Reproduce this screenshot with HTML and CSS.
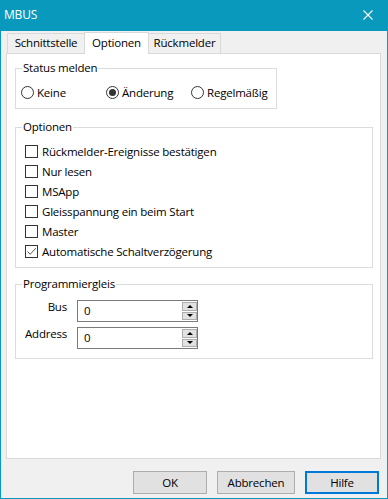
FILE: index.html
```html
<!DOCTYPE html>
<html lang="de">
<head>
    <meta charset="UTF-8">
    <title>MBUS</title>
    <link rel="stylesheet" href="styles.css">
</head>
<body>
    <div class="window">
        <!-- Title bar -->
        <div class="titlebar">
            <span class="title">MBUS</span>
            <svg class="close" width="10" height="10" viewBox="0 0 10 10">
                <path d="M0.5 0.5 L9.5 9.5 M9.5 0.5 L0.5 9.5" stroke="#fff" stroke-width="1.1" fill="none"/>
            </svg>
        </div>

        <!-- Tabs -->
        <div class="tabs">
            <div class="tab tab-1">Schnittstelle</div>
            <div class="tab tab-2 active">Optionen</div>
            <div class="tab tab-3">Rückmelder</div>
        </div>

        <div class="panel">
            <div class="group group-status">
                <span class="group-title">Status melden</span>
                <div class="radio-row">
                    <label class="radio"><span class="dot"></span>Keine</label>
                    <label class="radio"><span class="dot checked"></span>Änderung</label>
                    <label class="radio"><span class="dot"></span>Regelmäßig</label>
                </div>
            </div>

            <div class="group group-options">
                <span class="group-title">Optionen</span>
                <label class="check"><span class="box"></span>Rückmelder-Ereignisse bestätigen</label>
                <label class="check"><span class="box"></span>Nur lesen</label>
                <label class="check"><span class="box"></span>MSApp</label>
                <label class="check"><span class="box"></span>Gleisspannung ein beim Start</label>
                <label class="check"><span class="box"></span>Master</label>
                <label class="check">
                    <span class="box">
                        <svg width="11" height="11" viewBox="0 0 11 11"><path d="M1.5 5.5 L4.2 8.3 L9.8 2.2" stroke="#555" stroke-width="1" fill="none"/></svg>
                    </span>Automatische Schaltverzögerung
                </label>
            </div>

            <div class="group group-prog">
                <span class="group-title">Programmiergleis</span>
                <div class="field">
                    <span class="field-label">Bus</span>
                    <div class="spin">
                        <span class="spin-value">0</span>
                        <div class="spin-btns">
                            <span class="spin-btn"><span class="arrow up"></span></span>
                            <span class="spin-btn"><span class="arrow down"></span></span>
                        </div>
                    </div>
                </div>
                <div class="field">
                    <span class="field-label">Address</span>
                    <div class="spin">
                        <span class="spin-value">0</span>
                        <div class="spin-btns">
                            <span class="spin-btn"><span class="arrow up"></span></span>
                            <span class="spin-btn"><span class="arrow down"></span></span>
                        </div>
                    </div>
                </div>
            </div>
        </div>

        <!-- Dialog buttons -->
        <div class="footer">
            <button class="btn btn-ok">OK</button>
            <button class="btn btn-cancel">Abbrechen</button>
            <button class="btn btn-help default">Hilfe</button>
        </div>
    </div>
</body>
</html>
```

FILE: styles.css
```css
/* General Reset */
* {
    margin: 0;
    padding: 0;
    box-sizing: border-box;
}

body {
    font-family: "Open Sans", "Noto Sans", sans-serif;
    font-size: 11.5px;
    letter-spacing: -0.2px;
    color: #000;
    background-color: #f0f0f0;
}

.window {
    width: 388px;
    height: 499px;
    border: 1px solid #0899bd;
    background-color: #f0f0f0;
    display: flex;
    flex-direction: column;
}

.titlebar {
    height: 30px;
    background-color: #0899bd;
    color: #fff;
    display: flex;
    align-items: center;
    justify-content: space-between;
    padding: 0 14px 3px 3px;
}

.title {
    font-size: 12px;
}

/* Tabs */
.tabs {
    display: flex;
    align-items: flex-end;
    height: 22px;
    padding-left: 6px;
}

.tab {
    height: 20px;
    border: 1px solid #d9d9d9;
    border-bottom: none;
    background-color: #f0f0f0;
    text-align: center;
    line-height: 18px;
}

.tab-1 { width: 77px; border-right: none; }
.tab-2 { width: 65px; }
.tab-3 { width: 72px; border-left: none; }

.tab.active {
    height: 22px;
    margin-bottom: -1px;
    background-color: #fff;
    line-height: 19px;
    position: relative;
    z-index: 1;
}

.panel {
    width: 375px;
    height: 406px;
    margin-left: 5px;
    border: 1px solid #d9d9d9;
    background-color: #fff;
    padding: 14px 7px 0 8px;
}

/* Group boxes */
.group {
    position: relative;
    border: 1px solid #dcdcdc;
}

.group-title {
    position: absolute;
    top: -9px;
    left: 6px;
    padding: 0 1px;
    background-color: #fff;
    line-height: 16px;
}

.group-status {
    width: 262px;
    height: 41px;
    padding: 13px 0 0 5px;
}

.group-options {
    margin-top: 18px;
    height: 141px;
    padding: 13px 0 0 9px;
}

.group-prog {
    margin-top: 16px;
    height: 75px;
    padding: 15px 0 0 9px;
}

/* Radio buttons */
.radio-row {
    display: flex;
}

.radio {
    width: 85px;
    height: 20px;
    display: flex;
    align-items: center;
    white-space: nowrap;
}

.dot {
    width: 13px;
    height: 13px;
    border: 1px solid #333;
    border-radius: 50%;
    margin-right: 3px;
    display: flex;
    align-items: center;
    justify-content: center;
    flex-shrink: 0;
}

.dot.checked::after {
    content: "";
    width: 7px;
    height: 7px;
    border-radius: 50%;
    background-color: #333;
}

/* Checkboxes */
.check {
    height: 20px;
    display: flex;
    align-items: center;
}

.box {
    width: 13px;
    height: 13px;
    border: 1px solid #333;
    margin-right: 4px;
    display: flex;
    align-items: center;
    justify-content: center;
}

/* Number fields */
.field {
    display: flex;
    align-items: flex-start;
    margin-bottom: 5px;
}

.field-label {
    width: 42px;
    text-align: right;
    line-height: 14px;
    margin-right: 10px;
}

.spin {
    width: 121px;
    height: 22px;
    border: 1px solid #7a7a7a;
    display: flex;
    background-color: #fff;
}

.spin-value {
    flex: 1;
    padding-left: 6px;
    line-height: 20px;
}

.spin-btns {
    display: flex;
    flex-direction: column;
    gap: 1px;
    padding: 1px 0;
}

.spin-btn {
    width: 15px;
    height: 9px;
    border: 1px solid #adadad;
    background-color: #e1e1e1;
    display: flex;
    align-items: center;
    justify-content: center;
}

.arrow {
    width: 0;
    height: 0;
    border-left: 3px solid transparent;
    border-right: 3px solid transparent;
}

.arrow.up { border-bottom: 3px solid #000; }
.arrow.down { border-top: 3px solid #000; }

/* Dialog buttons */
.footer {
    display: flex;
    justify-content: flex-end;
    gap: 10px;
    margin-top: 12px;
    padding-right: 8px;
}

.btn {
    height: 23px;
    border: 1px solid #adadad;
    background-color: #e1e1e1;
    font-family: inherit;
    font-size: 11.5px;
    letter-spacing: -0.2px;
    color: #000;
}

.btn-ok { width: 74px; }
.btn-cancel { width: 78px; }
.btn-help { width: 74px; }

.btn.default {
    border: 2px solid #0078d7;
}
```
